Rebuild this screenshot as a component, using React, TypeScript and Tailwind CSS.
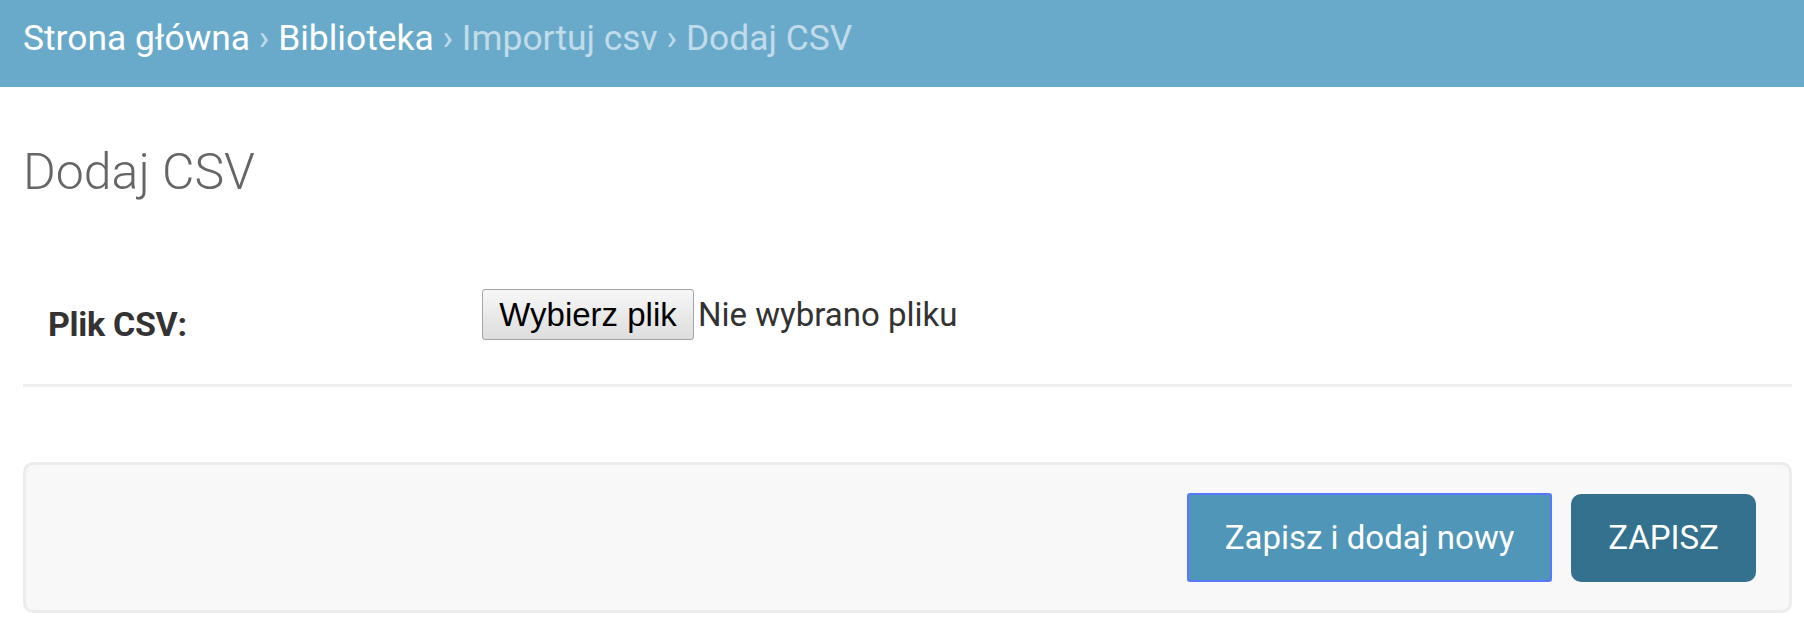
import React from "react"

// breadcrumb items, last ones are not links
const CRUMBS = [
    { label: "Strona główna", link: true },
    { label: "Biblioteka", link: true },
    { label: "Importuj csv", link: false },
    { label: "Dodaj CSV", link: false },
]

export default function App() {
    return (
        <div className="min-h-[642px] w-full bg-white font-['Roboto',sans-serif] text-[#333]">
            <div className="h-[87px] bg-[#69aacb] pl-[23px] pt-[18px] text-[35.4px] leading-[41px] text-[#c1dbe9] whitespace-nowrap">
                {CRUMBS.map((c, idx) => (
                    <React.Fragment key={idx}>
                        {idx > 0 && <span> › </span>}
                        <span className={c.link ? "text-white" : ""}>{c.label}</span>
                    </React.Fragment>
                ))}
            </div>

            <div className="pl-[23px] pr-[12px]">
                <h1 className="mt-[55px] text-[50px] font-light leading-[60px] text-[#666]">Dodaj CSV</h1>

                <div className="mt-[62px] flex h-[123px] items-start border-b-[3px] border-[#eeeeee] px-[25px] pt-[25px]">
                    <label className="w-[434px] shrink-0 pt-[10px] text-[34px] font-bold leading-[50px] tracking-[-0.3px] text-[#333]">
                        Plik CSV:
                    </label>
                    <div className="flex items-center">
                        <span className="flex h-[51px] w-[212px] items-center justify-center rounded-[3px] border border-[#a5a5a5] bg-gradient-to-b from-[#f7f7f7] to-[#dddddd] font-['Liberation_Sans',Arial,sans-serif] text-[33px] text-black">
                            Wybierz plik
                        </span>
                        <span className="ml-[4px] text-[33px] text-[#333]">Nie wybrano pliku</span>
                    </div>
                </div>

                <div className="mt-[75px] flex h-[151px] items-center justify-end gap-[19px] rounded-[10px] border-[3px] border-[#ececec] bg-[#f8f8f8] pr-[33px]">
                    <button className="flex h-[89px] w-[365px] items-center justify-center rounded-[3px] border-[2.5px] border-[#5878fb] bg-[#5096b8] text-[33px] text-white">
                        Zapisz i dodaj nowy
                    </button>
                    <button className="flex h-[88px] w-[185px] items-center justify-center rounded-[10px] bg-[#33718f] text-[33px] text-white">
                        ZAPISZ
                    </button>
                </div>
            </div>
        </div>
    )
}
